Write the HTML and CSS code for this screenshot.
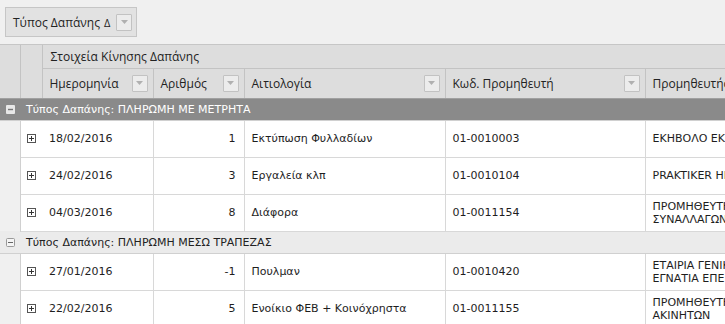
FILE: index.html
```html
<!DOCTYPE html>
<html lang="el">
<head>
<meta charset="utf-8">
<link rel="stylesheet" href="styles.css">
</head>
<body>
<div class="grid">
  <div class="group-panel">
    <div class="group-chip">
      <span class="chip-text">Τύπος Δαπάνης</span>
      <span class="chip-sort">Δ</span>
      <span class="filter-btn"><svg width="7" height="4" viewBox="0 0 7 4"><path d="M0 0h7L3.5 4z" fill="#b0b0b0"/></svg></span>
    </div>
  </div>
  <div class="table-wrap">
    <table class="tbl">
      <colgroup>
        <col style="width:20px"><col style="width:22px"><col style="width:111px"><col style="width:91px"><col style="width:201px"><col style="width:200px"><col style="width:130px">
      </colgroup>
      <thead>
        <tr class="band-row">
          <th class="h-ind" rowspan="2"></th>
          <th class="h-exp" rowspan="2"></th>
          <th class="band" colspan="5">Στοιχεία Κίνησης Δαπάνης</th>
        </tr>
        <tr class="col-row">
          <th><div class="hc"><span>Ημερομηνία</span><span class="filter-btn"><svg width="7" height="4" viewBox="0 0 7 4"><path d="M0 0h7L3.5 4z" fill="#b0b0b0"/></svg></span></div></th>
          <th><div class="hc"><span>Αριθμός</span><span class="filter-btn"><svg width="7" height="4" viewBox="0 0 7 4"><path d="M0 0h7L3.5 4z" fill="#b0b0b0"/></svg></span></div></th>
          <th><div class="hc"><span>Αιτιολογία</span><span class="filter-btn"><svg width="7" height="4" viewBox="0 0 7 4"><path d="M0 0h7L3.5 4z" fill="#b0b0b0"/></svg></span></div></th>
          <th><div class="hc"><span>Κωδ. Προμηθευτή</span><span class="filter-btn"><svg width="7" height="4" viewBox="0 0 7 4"><path d="M0 0h7L3.5 4z" fill="#b0b0b0"/></svg></span></div></th>
          <th><div class="hc"><span>Προμηθευτής</span></div></th>
        </tr>
      </thead>
      <tbody>
        <tr class="grp grp-dark">
          <td class="g-ind"><span class="tog tog-dark"><svg width="9" height="9" viewBox="0 0 9 9"><rect x="0" y="0" width="9" height="9" rx="1" fill="#e8e8e8"/><path d="M2 4.5h5" stroke="#777" stroke-width="1.4"/></svg></span></td>
          <td colspan="6" class="g-text">Τύπος Δαπάνης: ΠΛΗΡΩΜΗ ΜΕ ΜΕΤΡΗΤΑ</td>
        </tr>
        <tr class="data">
          <td class="ind"></td>
          <td class="exp"><svg class="plus" width="9" height="9" viewBox="0 0 9 9"><rect x="0.5" y="0.5" width="8" height="8" fill="#fff" stroke="#555"/><path d="M2 4.5h5M4.5 2v5" stroke="#333"/></svg></td>
          <td>18/02/2016</td>
          <td class="num">1</td>
          <td>Εκτύπωση Φυλλαδίων</td>
          <td>01-0010003</td>
          <td class="sup">ΕΚΗΒΟΛΟ ΕΚΔΟΣΕΙΣ</td>
        </tr>
        <tr class="data">
          <td class="ind"></td>
          <td class="exp"><svg class="plus" width="9" height="9" viewBox="0 0 9 9"><rect x="0.5" y="0.5" width="8" height="8" fill="#fff" stroke="#555"/><path d="M2 4.5h5M4.5 2v5" stroke="#333"/></svg></td>
          <td>24/02/2016</td>
          <td class="num">3</td>
          <td>Εργαλεία κλπ</td>
          <td>01-0010104</td>
          <td class="sup">PRAKTIKER HELLAS</td>
        </tr>
        <tr class="data">
          <td class="ind"></td>
          <td class="exp"><svg class="plus" width="9" height="9" viewBox="0 0 9 9"><rect x="0.5" y="0.5" width="8" height="8" fill="#fff" stroke="#555"/><path d="M2 4.5h5M4.5 2v5" stroke="#333"/></svg></td>
          <td>04/03/2016</td>
          <td class="num">8</td>
          <td>Διάφορα</td>
          <td>01-0011154</td>
          <td class="sup sup2">ΠΡΟΜΗΘΕΥΤΗΣ<br>ΣΥΝΑΛΛΑΓΩΝ</td>
        </tr>
        <tr class="grp grp-light">
          <td class="g-ind"><span class="tog"><svg width="9" height="9" viewBox="0 0 9 9"><rect x="0.5" y="0.5" width="8" height="8" rx="1" fill="#f4f4f4" stroke="#999"/><path d="M2 4.5h5" stroke="#666"/></svg></span></td>
          <td colspan="6" class="g-text">Τύπος Δαπάνης: ΠΛΗΡΩΜΗ ΜΕΣΩ ΤΡΑΠΕΖΑΣ</td>
        </tr>
        <tr class="data">
          <td class="ind"></td>
          <td class="exp"><svg class="plus" width="9" height="9" viewBox="0 0 9 9"><rect x="0.5" y="0.5" width="8" height="8" fill="#fff" stroke="#555"/><path d="M2 4.5h5M4.5 2v5" stroke="#333"/></svg></td>
          <td>27/01/2016</td>
          <td class="num">-1</td>
          <td>Πουλμαν</td>
          <td>01-0010420</td>
          <td class="sup sup2">ΕΤΑΙΡΙΑ ΓΕΝΙΚΩΝ<br>ΕΓΝΑΤΙΑ ΕΠΕ</td>
        </tr>
        <tr class="data">
          <td class="ind"></td>
          <td class="exp"><svg class="plus" width="9" height="9" viewBox="0 0 9 9"><rect x="0.5" y="0.5" width="8" height="8" fill="#fff" stroke="#555"/><path d="M2 4.5h5M4.5 2v5" stroke="#333"/></svg></td>
          <td>22/02/2016</td>
          <td class="num">5</td>
          <td>Ενοίκιο ΦΕΒ + Κοινόχρηστα</td>
          <td>01-0011155</td>
          <td class="sup sup2">ΠΡΟΜΗΘΕΥΤΗΣ<br>ΑΚΙΝΗΤΩΝ</td>
        </tr>
      </tbody>
    </table>
  </div>
</div>
</body>
</html>
```

FILE: styles.css
```css
* { box-sizing: border-box; }
html, body { margin: 0; padding: 0; background: #fff; }
body { font-family: "DejaVu Sans", Verdana, sans-serif; font-size: 11px; color: #1e1e1e; }

.grid { width: 725px; height: 324px; overflow: hidden; }

.group-panel {
  height: 45px;
  background: #f0f0f0;
  border-bottom: 1px solid #c6c6c6;
  padding: 7px 0 0 5px;
}
.group-chip {
  display: inline-flex;
  align-items: center;
  height: 30px;
  width: 132px;
  padding: 0 0 0 7px;
  background: #e2e2e2;
  border: 1px solid #c6c6c6;
  font-family: "Open Sans", sans-serif;
  font-size: 12px;
  color: #222;
}
.chip-sort { margin-left: 4px; font-size: 11px; }
.group-chip .filter-btn { margin-left: 6px; }

.filter-btn {
  display: inline-flex;
  align-items: center;
  justify-content: center;
  width: 16px;
  height: 17px;
  border: 1px solid #c2c2c2;
  background: #ececec;
  border-radius: 1px;
  flex: none;
}

.table-wrap { width: 725px; overflow: hidden; }
.tbl {
  table-layout: fixed;
  border-collapse: collapse;
  width: 775px;
}
.tbl th, .tbl td { padding: 0; overflow: hidden; white-space: nowrap; }

.tbl thead th {
  background: #dddddd;
  font-family: "Open Sans", sans-serif;
  font-weight: normal;
  font-size: 12px;
  color: #222;
  text-align: left;
  border-right: 1px solid #c3c3c3;
  border-bottom: 1px solid #c3c3c3;
}
.band-row { height: 23px; }
.tbl thead th.band { padding-left: 8px; }
.col-row { height: 30px; }
.tbl .col-row th { border-bottom: 1px solid #a0a0a0; }
.tbl thead th.h-ind, .tbl thead th.h-exp { border-bottom: 1px solid #a0a0a0; }
.hc {
  display: flex;
  align-items: center;
  justify-content: space-between;
  padding: 0 5px 0 7px;
}

.grp { height: 22px; }
.tbl .grp td { border-bottom: 1px solid #d0d0d0; }
.grp-dark { background: #8a8a8a; color: #fff; }
.grp-light { background: #ebebeb; color: #222; }
.tbl td.g-ind { text-align: center; }
.tog { display: inline-flex; vertical-align: middle; }
.tbl td.g-text { padding-left: 6px; }

.data { height: 37px; }
.tbl .data td { border-bottom: 1px solid #d8d8d8; border-right: 1px solid #d8d8d8; padding: 0 8px 0 7px; }
.tbl .data td.ind { background: #f0f0f0; border-bottom: none; border-right: 1px solid #d0d0d0; padding: 0; }
.tbl .data td.exp { border-right: none; padding: 0 0 0 6px; }
.plus { display: block; }
.tbl .data td.num { text-align: right; padding-right: 8px; }
.sup2 { font-size: 11px; line-height: 13px; }
```
